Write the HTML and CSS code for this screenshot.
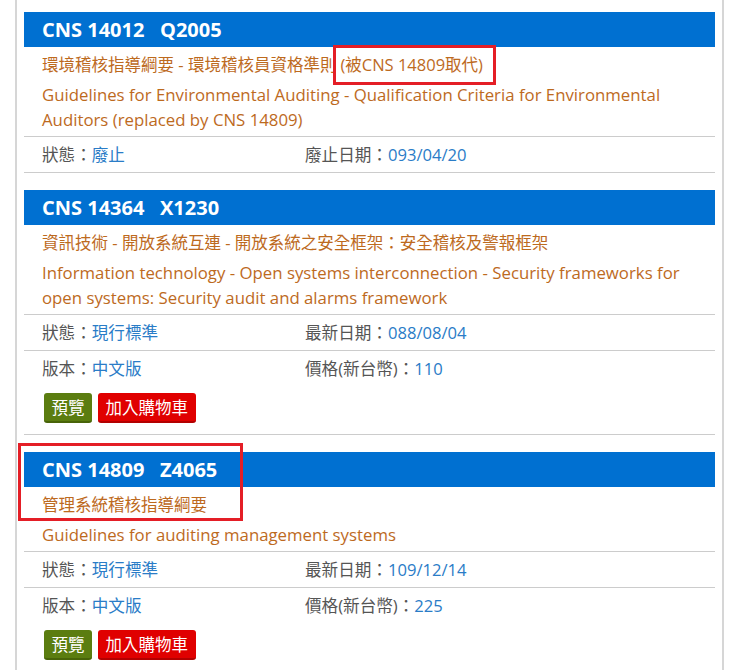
FILE: index.html
```html
<!DOCTYPE html>
<html>
<head lang="zh-Hant">
    <meta charset="UTF-8">
    <title>標準查詢</title>
    <link rel="stylesheet" href="styles.css">
</head>
<body>

<div class="page">

    <!-- 第一筆 -->
    <div class="std-item">
        <div class="std-head">CNS 14012&nbsp;&nbsp;&nbsp;Q2005</div>
        <div class="std-name-zh">環境稽核指導綱要 - 環境稽核員資格準則<span class="mark">(被CNS 14809取代)</span></div>
        <div class="std-name-en">Guidelines for Environmental Auditing - Qualification Criteria for Environmental Auditors (replaced by CNS 14809)</div>
        <div class="std-row">
            <div class="std-cell"><span class="label">狀態：</span><a href="javascript:void(0);">廢止</a></div>
            <div class="std-cell"><span class="label">廢止日期：</span><a href="javascript:void(0);">093/04/20</a></div>
        </div>
    </div>

    <!-- 第二筆 -->
    <div class="std-item">
        <div class="std-head">CNS 14364&nbsp;&nbsp;&nbsp;X1230</div>
        <div class="std-name-zh">資訊技術 - 開放系統互連 - 開放系統之安全框架：安全稽核及警報框架</div>
        <div class="std-name-en">Information technology - Open systems interconnection - Security frameworks for open systems: Security audit and alarms framework</div>
        <div class="std-row">
            <div class="std-cell"><span class="label">狀態：</span><a href="javascript:void(0);">現行標準</a></div>
            <div class="std-cell"><span class="label">最新日期：</span><a href="javascript:void(0);">088/08/04</a></div>
        </div>
        <div class="std-row">
            <div class="std-cell"><span class="label">版本：</span><a href="javascript:void(0);">中文版</a></div>
            <div class="std-cell"><span class="label">價格(新台幣)：</span><a href="javascript:void(0);">110</a></div>
        </div>
        <div class="std-actions">
            <a href="javascript:void(0);" class="btn btn-preview">預覽</a>
            <a href="javascript:void(0);" class="btn btn-cart">加入購物車</a>
        </div>
    </div>

    <!-- 第三筆 -->
    <div class="std-item">
        <div class="mark-box"></div>
        <div class="std-head">CNS 14809&nbsp;&nbsp;&nbsp;Z4065</div>
        <div class="std-name-zh">管理系統稽核指導綱要</div>
        <div class="std-name-en">Guidelines for auditing management systems</div>
        <div class="std-row">
            <div class="std-cell"><span class="label">狀態：</span><a href="javascript:void(0);">現行標準</a></div>
            <div class="std-cell"><span class="label">最新日期：</span><a href="javascript:void(0);">109/12/14</a></div>
        </div>
        <div class="std-row">
            <div class="std-cell"><span class="label">版本：</span><a href="javascript:void(0);">中文版</a></div>
            <div class="std-cell"><span class="label">價格(新台幣)：</span><a href="javascript:void(0);">225</a></div>
        </div>
        <div class="std-actions">
            <a href="javascript:void(0);" class="btn btn-preview">預覽</a>
            <a href="javascript:void(0);" class="btn btn-cart">加入購物車</a>
        </div>
    </div>

</div>

</body>
</html>
```

FILE: styles.css
```css
* {
    padding: 0px;
    margin: 0px;
    box-sizing: border-box;
}

body {
    background: #ffffff;
    font-family: "Open Sans", "Noto Sans CJK TC", sans-serif;
    font-size: 16px;
    color: #555555;
}

a {
    text-decoration: none;
    color: #2a7cc7;
}

.page {
    width: 709px;
    min-height: 100vh;
    margin-left: 15px;
    padding: 12px 7px 0px 7px;
    border-left: 2px solid #d6d6d6;
    border-right: 2px solid #d6d6d6;
}

.std-item {
    position: relative;
    margin-bottom: 17px;
    border-bottom: 1px solid #cccccc;
}

.std-head {
    height: 35px;
    line-height: 35px;
    padding-left: 18px;
    background: #0070d1;
    color: #ffffff;
    font-size: 20px;
    font-weight: bold;
}

.std-name-zh {
    padding: 6px 18px 0px 18px;
    line-height: 24px;
    font-size: 16.5px;
    color: #bd6a1e;
}

.std-name-en {
    padding: 5px 18px 4px 18px;
    line-height: 25px;
    font-size: 16.8px;
    color: #bd6a1e;
}

.std-row {
    display: grid;
    grid-template-columns: 263px 1fr;
    height: 36px;
    line-height: 35px;
    padding-left: 18px;
    border-top: 1px solid #cccccc;
    font-size: 16.6px;
}

.std-actions {
    display: flex;
    gap: 6px;
    padding: 7px 0px 11px 20px;
}

.btn {
    display: block;
    height: 30px;
    line-height: 29px;
    padding: 0px 7.5px;
    border-radius: 3px;
    color: #ffffff;
    font-size: 16.5px;
}

.btn-preview {
    background: #5b7d10;
    border-bottom: 2px solid #486409;
}

.btn-cart {
    background: #e00000;
    border-bottom: 2px solid #b30000;
}

/* 紅框標示 */
.mark {
    margin-left: -3px;
    padding: 5px 10px 6px 4px;
    border: 3px solid #e41e26;
}

.mark-box {
    position: absolute;
    left: -6px;
    top: -9px;
    width: 225px;
    height: 78px;
    border: 3px solid #e41e26;
    z-index: 2;
}
```
